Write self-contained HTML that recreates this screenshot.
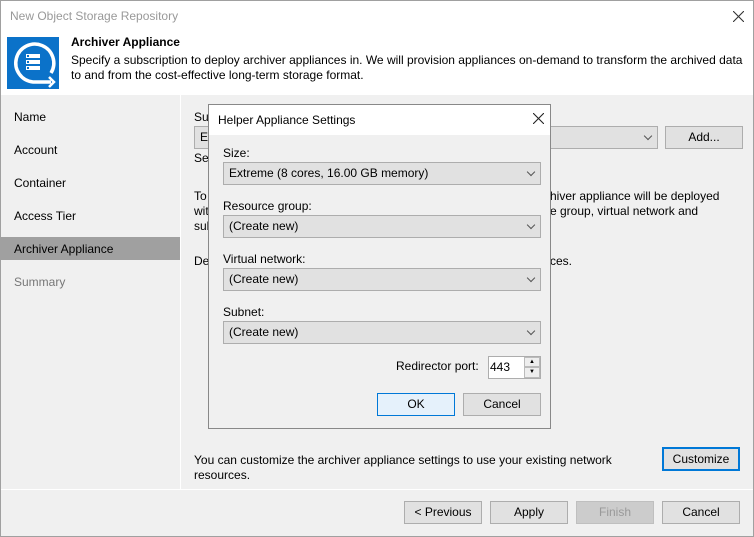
<!DOCTYPE html>
<html><head><style>
*{box-sizing:border-box;margin:0;padding:0}
body{width:754px;height:537px;overflow:hidden;background:#f0f0f0;font-family:"Liberation Sans",sans-serif;font-size:12px;color:#000;position:relative}
.a{position:absolute;white-space:nowrap}
.btn{position:absolute;height:23px;background:#e1e1e1;border:1px solid #adadad;text-align:center;line-height:21px;font-size:12px}
.cb{position:absolute;height:23px;background:#e1e1e1;border:1px solid #adadad;line-height:21px;padding-left:5px}
.cb:after{content:"";position:absolute;right:6px;top:6px;width:5px;height:5px;border-right:1px solid #555;border-bottom:1px solid #555;transform:rotate(45deg)}
</style></head><body>
<div class="a" style="left:0;top:0;width:754px;height:537px;border:1px solid #a0a0a0"></div>
<div class="a" style="left:1px;top:1px;width:752px;height:94px;background:#fff"></div>
<div class="a" style="left:10px;top:9px;color:#999;font-size:12px">New Object Storage Repository</div>
<svg class="a" style="left:733px;top:11px" width="11" height="11"><path d="M0 0L11 11M11 0L0 11" stroke="#333" stroke-width="1.1"/></svg>
<div class="a" style="left:7px;top:37px;width:52px;height:52px;background:#0b72c9">
<svg width="52" height="52" viewBox="0 0 52 52"><path d="M44 36 A19 19 0 1 0 26 45 H44" fill="none" stroke="#fff" stroke-width="3.5"/><path d="M42 40 L47 45 L42 50" fill="none" stroke="#fff" stroke-width="2.5"/><g fill="#fff"><rect x="19" y="17" width="14" height="4"/><rect x="19" y="23" width="14" height="4"/><rect x="19" y="29" width="14" height="4"/></g><g fill="#0b72c9"><rect x="20" y="18" width="2" height="2"/><rect x="20" y="24" width="2" height="2"/><rect x="20" y="30" width="2" height="2"/></g></svg></div>
<div class="a" style="left:71px;top:35px;font-weight:bold">Archiver Appliance</div>
<div class="a" style="left:71px;top:53px">Specify a subscription to deploy archiver appliances in. We will provision appliances on-demand to transform the archived data</div>
<div class="a" style="left:71px;top:68px">to and from the cost-effective long-term storage format.</div>
<div class="a" style="left:180px;top:95px;width:1px;height:394px;background:#fff"></div>
<div class="a" style="left:14px;top:110px">Name</div>
<div class="a" style="left:14px;top:143px">Account</div>
<div class="a" style="left:14px;top:176px">Container</div>
<div class="a" style="left:14px;top:209px">Access Tier</div>
<div class="a" style="left:1px;top:237px;width:179px;height:23px;background:#a0a0a0"></div>
<div class="a" style="left:14px;top:242px">Archiver Appliance</div>
<div class="a" style="left:14px;top:275px;color:#777">Summary</div>
<div class="a" style="left:194px;top:110px">Subscription:</div>
<div class="cb" style="left:194px;top:126px;width:464px">En</div>
<div class="btn" style="left:665px;top:126px;width:78px">Add...</div>
<div class="a" style="left:194px;top:151px">Sel</div>
<div class="a" style="left:194px;top:189px">To</div>
<div class="a" style="left:550px;top:189px">hiver appliance will be deployed</div>
<div class="a" style="left:194px;top:204px">wit</div>
<div class="a" style="left:550px;top:204px">e group, virtual network and</div>
<div class="a" style="left:194px;top:219px">sub</div>
<div class="a" style="left:194px;top:254px">De</div>
<div class="a" style="left:550px;top:254px">ces.</div>
<div class="a" style="left:194px;top:453px">You can customize the archiver appliance settings to use your existing network</div>
<div class="a" style="left:194px;top:468px">resources.</div>
<div class="btn" style="left:662px;top:447px;width:78px;height:24px;border:2px solid #0078d7;line-height:20px">Customize</div>
<div class="a" style="left:1px;top:489px;width:752px;height:1px;background:#fff"></div>
<div class="btn" style="left:404px;top:501px;width:78px">&lt; Previous</div>
<div class="btn" style="left:490px;top:501px;width:78px">Apply</div>
<div class="btn" style="left:576px;top:501px;width:78px;background:#ccc;border-color:#bfbfbf;color:#999">Finish</div>
<div class="btn" style="left:662px;top:501px;width:78px">Cancel</div>
<!-- dialog -->
<div class="a" style="left:208px;top:104px;width:343px;height:325px;background:#f0f0f0;border:1px solid #888"></div>
<div class="a" style="left:209px;top:105px;width:341px;height:30px;background:#fff"></div>
<div class="a" style="left:218px;top:113px">Helper Appliance Settings</div>
<svg class="a" style="left:533px;top:113px" width="11" height="11"><path d="M0 0L11 11M11 0L0 11" stroke="#222" stroke-width="1.1"/></svg>
<div class="a" style="left:223px;top:146px">Size:</div>
<div class="cb" style="left:223px;top:162px;width:318px">Extreme (8 cores, 16.00 GB memory)</div>
<div class="a" style="left:223px;top:199px">Resource group:</div>
<div class="cb" style="left:223px;top:215px;width:318px">(Create new)</div>
<div class="a" style="left:223px;top:252px">Virtual network:</div>
<div class="cb" style="left:223px;top:268px;width:318px">(Create new)</div>
<div class="a" style="left:223px;top:305px">Subnet:</div>
<div class="cb" style="left:223px;top:321px;width:318px">(Create new)</div>
<div class="a" style="left:396px;top:359px">Redirector port:</div>
<div class="a" style="left:488px;top:356px;width:53px;height:23px;background:#fff;border:1px solid #adadad;padding:3px 0 0 1px">443</div>
<div class="a" style="left:524px;top:357px;width:16px;height:10px;background:#eee;border:1px solid #bbb;font-size:6px;text-align:center;line-height:8px">▲</div>
<div class="a" style="left:524px;top:367px;width:16px;height:11px;background:#eee;border:1px solid #bbb;font-size:6px;text-align:center;line-height:9px">▼</div>
<div class="btn" style="left:377px;top:393px;width:78px;background:#e5f1fb;border-color:#0078d7">OK</div>
<div class="btn" style="left:463px;top:393px;width:78px">Cancel</div>
</body></html>
